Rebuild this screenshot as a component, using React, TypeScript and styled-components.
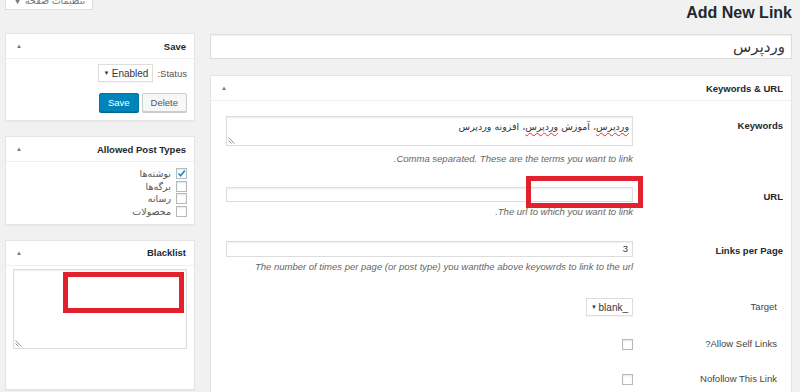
import styled, { createGlobalStyle } from "styled-components";

const GlobalStyle = createGlobalStyle`
  html, body {
    margin: 0;
    padding: 0;
    background: #f1f1f1;
  }
  body {
    font-family: "Liberation Sans", "DejaVu Sans", Arial, sans-serif;
    color: #444;
    direction: rtl;
  }
`;

export default function App() {
  return (
    <>
      <GlobalStyle />
      <Page>
        <Header>
          <PageTitle>Add New Link</PageTitle>
          <ScreenTab>تنظیمات صفحه ▼</ScreenTab>
        </Header>
        <Columns>
          <MainCol>
            <TitleField>وردپرس</TitleField>
            <Postbox>
              <BoxHeader>
                <BoxTitle>Keywords &amp; URL</BoxTitle>
                <Toggle>▲</Toggle>
              </BoxHeader>
              <FormBody>
                <Row $top={15}>
                  <Label $bold>Keywords</Label>
                  <Field>
                    <TextBox>
                      <Spell>وردپرس</Spell>، آموزش <Spell>وردپرس</Spell>، افزونه وردپرس
                      <Grip />
                    </TextBox>
                    <Desc $gap={7}>Comma separated. These are the terms you want to link.</Desc>
                  </Field>
                </Row>
                <Row $top={22}>
                  <Label $bold>URL</Label>
                  <Field>
                    <Input $h={15} />
                    <Desc>The url to which you want to link.</Desc>
                  </Field>
                </Row>
                <Row $top={23}>
                  <Label $bold>Links per Page</Label>
                  <Field>
                    <Input $h={16}>3</Input>
                    <Desc>The number of times per page (or post type) you wantthe above keyowrds to link to the url</Desc>
                  </Field>
                </Row>
                <Row $top={25} $center>
                  <Label>Target</Label>
                  <Field>
                    <SelectBox $w={47}>
                      <span>_blank</span>
                      <Caret>▼</Caret>
                    </SelectBox>
                  </Field>
                </Row>
                <Row $top={22} $center>
                  <Label>Allow Self Links?</Label>
                  <Field>
                    <Check />
                  </Field>
                </Row>
                <Row $top={23} $center>
                  <Label>Nofollow This Link</Label>
                  <Field>
                    <Check />
                  </Field>
                </Row>
              </FormBody>
            </Postbox>
          </MainCol>

          <Sidebar>
            <SideBox>
              <BoxHeader>
                <BoxTitle>Save</BoxTitle>
                <Toggle>▲</Toggle>
              </BoxHeader>
              <SaveBody>
                <StatusRow>
                  <SmallText>Status:</SmallText>
                  <SelectBox $w={55}>
                    <span>Enabled</span>
                    <Caret>▼</Caret>
                  </SelectBox>
                </StatusRow>
                <ButtonRow>
                  <Button>Delete</Button>
                  <Button $primary>Save</Button>
                </ButtonRow>
              </SaveBody>
            </SideBox>

            <SideBox>
              <BoxHeader>
                <BoxTitle>Allowed Post Types</BoxTitle>
                <Toggle>▲</Toggle>
              </BoxHeader>
              <CheckList>
                {[
                  { label: "نوشته‌ها", on: true },
                  { label: "برگه‌ها", on: false },
                  { label: "رسانه", on: false },
                  { label: "محصولات", on: false },
                ].map((t) => (
                  <CheckItem key={t.label}>
                    <Check $size={11}>
                      {t.on && (
                        <svg width="11" height="11" viewBox="0 0 11 11">
                          <path d="M1.8 5.5 L4.4 8.2 L9.5 2" fill="none" stroke="#1e8cbe" strokeWidth="2" />
                        </svg>
                      )}
                    </Check>
                    <ItemText>{t.label}</ItemText>
                  </CheckItem>
                ))}
              </CheckList>
            </SideBox>

            <SideBox>
              <BoxHeader>
                <BoxTitle>Blacklist</BoxTitle>
                <Toggle>▲</Toggle>
              </BoxHeader>
              <BlackBody>
                <BlackArea>
                  <Grip />
                </BlackArea>
              </BlackBody>
            </SideBox>
          </Sidebar>
        </Columns>

        <Mark $x={526} $y={176} $w={117} $h={32} />
        <Mark $x={63} $y={272} $w={121} $h={41} />
      </Page>
    </>
  );
}

function Grip() {
  return (
    <GripIcon width="7" height="7" viewBox="0 0 7 7">
      <path d="M0.5 0.5 L6.5 6.5 M0.5 3.5 L3.5 6.5" stroke="#888" strokeWidth="0.9" />
    </GripIcon>
  );
}

const Page = styled.div`
  position: relative;
  height: 392px;
  overflow: hidden;
  padding: 0 8px 0 5px;
`;

const Header = styled.div`
  display: flex;
  justify-content: space-between;
  align-items: flex-start;
  height: 33px;
`;

const PageTitle = styled.h1`
  margin: 4px 0 0;
  font-size: 16px;
  line-height: 18px;
  font-weight: 700;
  color: #23282d;
  direction: ltr;
`;

const ScreenTab = styled.div`
  box-sizing: border-box;
  width: 88px;
  height: 20px;
  margin-top: -10px;
  padding-bottom: 3px;
  display: flex;
  align-items: flex-end;
  justify-content: center;
  background: #fff;
  border: 1px solid #ddd;
  border-top: 0;
  font-size: 9.5px;
  line-height: 11px;
  color: #72777c;
`;

const Columns = styled.div`
  display: grid;
  grid-template-columns: 582px 190px;
  column-gap: 15px;
  align-items: start;
`;

const MainCol = styled.div`
  display: flex;
  flex-direction: column;
  padding-top: 1px;
`;

const TitleField = styled.div`
  box-sizing: border-box;
  height: 25px;
  display: flex;
  align-items: center;
  padding: 0 6px;
  background: #fff;
  border: 1px solid #ddd;
  box-shadow: inset 0 1px 2px rgba(0, 0, 0, 0.07);
  font-family: "DejaVu Sans", sans-serif;
  font-size: 15px;
  color: #32373c;
`;

const Postbox = styled.div`
  margin-top: 16px;
  background: #fff;
  border: 1px solid #e5e5e5;
  box-shadow: 0 1px 1px rgba(0, 0, 0, 0.04);
  min-height: 340px;
`;

const SideBox = styled.div`
  background: #fff;
  border: 1px solid #e5e5e5;
  box-shadow: 0 1px 1px rgba(0, 0, 0, 0.04);
  & + & {
    margin-top: 15px;
  }
`;

const Sidebar = styled.div`
  display: flex;
  flex-direction: column;
`;

const BoxHeader = styled.div`
  height: 24px;
  display: flex;
  align-items: center;
  justify-content: space-between;
  padding: 0 8px 0 10px;
  border-bottom: 1px solid #eee;
`;

const BoxTitle = styled.div`
  font-size: 9.5px;
  font-weight: 700;
  color: #23282d;
  direction: ltr;
`;

const Toggle = styled.span`
  font-size: 6px;
  color: #72777c;
`;

const FormBody = styled.div`
  display: flex;
  flex-direction: column;
  padding-bottom: 20px;
`;

const Row = styled.div<{ $center?: boolean; $top: number }>`
  display: grid;
  grid-template-columns: 150px 407px;
  column-gap: 8px;
  padding-top: ${(p) => p.$top}px;
  align-items: ${(p) => (p.$center ? "center" : "start")};
`;

const Label = styled.div<{ $bold?: boolean }>`
  padding-right: ${(p) => (p.$bold ? 8 : 14)}px;
  padding-top: ${(p) => (p.$bold ? 4 : 0)}px;
  font-size: 9.5px;
  line-height: 12px;
  font-weight: ${(p) => (p.$bold ? 700 : 400)};
  color: ${(p) => (p.$bold ? "#23282d" : "#444")};
`;

const Field = styled.div`
  display: flex;
  flex-direction: column;
  align-items: flex-start;
`;

const TextBox = styled.div`
  position: relative;
  box-sizing: border-box;
  width: 100%;
  height: 30px;
  padding: 3px 3px;
  background: #fff;
  border: 1px solid #ddd;
  box-shadow: inset 0 1px 2px rgba(0, 0, 0, 0.07);
  font-family: "DejaVu Sans", sans-serif;
  font-size: 9.5px;
  line-height: 13px;
  color: #32373c;
`;

const Spell = styled.span`
  text-decoration: underline wavy #d33;
  text-decoration-thickness: 1px;
  text-underline-offset: 2px;
`;

const GripIcon = styled.svg`
  position: absolute;
  left: 1px;
  bottom: 1px;
`;

const Input = styled.div<{ $h: number }>`
  box-sizing: border-box;
  width: 100%;
  height: ${(p) => p.$h}px;
  padding: 0 4px;
  background: #fff;
  border: 1px solid #ddd;
  box-shadow: inset 0 1px 2px rgba(0, 0, 0, 0.07);
  font-size: 9.5px;
  line-height: ${(p) => p.$h - 2}px;
  color: #32373c;
`;

const Desc = styled.div<{ $gap?: number }>`
  margin-top: ${(p) => p.$gap ?? 4}px;
  font-size: 9.5px;
  line-height: 12px;
  font-style: italic;
  color: #666;
`;

const SelectBox = styled.div<{ $w: number }>`
  box-sizing: border-box;
  width: ${(p) => p.$w}px;
  height: 18px;
  display: flex;
  align-items: center;
  justify-content: space-between;
  padding: 0 4px;
  background: #fff;
  border: 1px solid #ddd;
  box-shadow: 0 1px 1px rgba(0, 0, 0, 0.04);
  font-size: 10px;
  color: #32373c;
`;

const Caret = styled.span`
  font-size: 6px;
  color: #32373c;
`;

const Check = styled.div<{ $size?: number }>`
  box-sizing: border-box;
  width: ${(p) => p.$size ?? 11}px;
  height: ${(p) => p.$size ?? 11}px;
  display: flex;
  align-items: center;
  justify-content: center;
  background: #fff;
  border: 1px solid #b4b9be;
  box-shadow: inset 0 1px 2px rgba(0, 0, 0, 0.1);
  flex-shrink: 0;
`;

const SaveBody = styled.div`
  padding: 5px 7px 8px;
`;

const StatusRow = styled.div`
  display: flex;
  align-items: center;
  gap: 4px;
`;

const SmallText = styled.span`
  font-size: 9.5px;
  color: #555;
`;

const ButtonRow = styled.div`
  display: flex;
  gap: 3px;
  margin-top: 11px;
`;

const Button = styled.div<{ $primary?: boolean }>`
  box-sizing: border-box;
  height: 19px;
  padding: 0 8px;
  display: flex;
  align-items: center;
  border-radius: 2px;
  font-size: 9.5px;
  background: ${(p) => (p.$primary ? "#0085ba" : "#f7f7f7")};
  border: 1px solid ${(p) => (p.$primary ? "#0073aa" : "#ccc")};
  box-shadow: 0 1px 0 ${(p) => (p.$primary ? "#006799" : "#ccc")};
  color: ${(p) => (p.$primary ? "#fff" : "#555")};
`;

const CheckList = styled.div`
  padding: 5px 7px 6px;
`;

const CheckItem = styled.div`
  height: 12.7px;
  display: flex;
  align-items: center;
  gap: 5px;
`;

const ItemText = styled.span`
  font-family: "DejaVu Sans", sans-serif;
  font-size: 9.5px;
  color: #555;
`;

const BlackBody = styled.div`
  padding: 3px 7px 40px;
`;

const BlackArea = styled.div`
  position: relative;
  height: 78px;
  background: #fff;
  border: 1px solid #ddd;
  box-shadow: inset 0 1px 2px rgba(0, 0, 0, 0.07);
`;

const Mark = styled.div<{ $x: number; $y: number; $w: number; $h: number }>`
  position: absolute;
  left: ${(p) => p.$x}px;
  top: ${(p) => p.$y}px;
  width: ${(p) => p.$w}px;
  height: ${(p) => p.$h}px;
  box-sizing: border-box;
  border: 5px solid #e3202e;
`;
